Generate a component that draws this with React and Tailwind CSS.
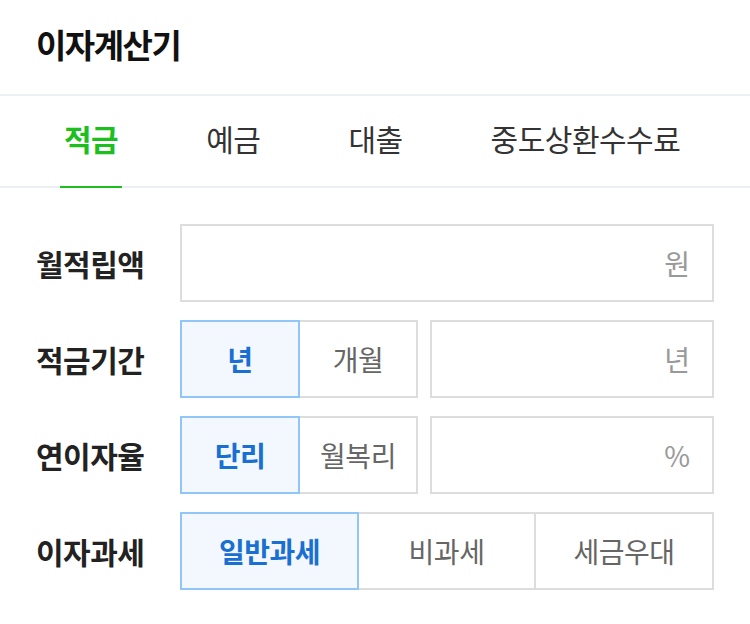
import React from 'react';

// ─── Data ───────────────────────
const TABS = ['적금', '예금', '대출', '중도상환수수료'];

function Segment({ items, widths }) {
  return (
    <div className="flex h-full">
      {items.map((item, idx) => (
        <div
          key={idx}
          className={
            (item.active
              ? 'border-2 border-[#90c6fa] bg-[#f3f8ff] text-[#1a6fd2] font-bold'
              : 'border-2 border-l-0 border-[#dddddd] bg-white text-[#666666]') +
            ' flex items-center justify-center text-[28px] tracking-[-0.5px] ' +
            widths[idx]
          }
        >
          {item.label}
        </div>
      ))}
    </div>
  );
}

function Field({ unit }) {
  return (
    <div className="flex-1 h-full border-2 border-[#dddddd] bg-white flex items-center justify-end pr-[22px] text-[28px] text-[#999999]">
      {unit}
    </div>
  );
}

function Row({ label, children }) {
  return (
    <div className="flex items-center h-[78px]">
      <div className="w-[144px] shrink-0 whitespace-nowrap text-[30px] font-bold text-[#222222] tracking-[-0.5px]">{label}</div>
      <div className="flex flex-1 h-full">{children}</div>
    </div>
  );
}

export default function App() {
  return (
    <div
      className="w-[750px] h-[624px] bg-white overflow-hidden"
      style={{ fontFamily: '"Noto Sans CJK KR", "Noto Sans", sans-serif' }}
    >
      {/* HEADER */}
      <header className="h-[96px] flex items-center pl-[36px] border-b-2 border-[#eceff3]">
        <h1 className="text-[33px] font-bold text-[#111111] tracking-[-1.5px] leading-none -mt-[6px]">이자계산기</h1>
      </header>

      {/* TABS */}
      <nav className="h-[92px] flex gap-[80px] pl-[60px] border-b-2 border-[#eceff3]">
        {TABS.map((tab, idx) => (
          <div
            key={idx}
            className={
              (idx === 0
                ? 'text-[#1cbf1e] font-bold border-[#1cbf1e]'
                : 'text-[#333333] border-transparent') +
              ' h-[92px] shrink-0 whitespace-nowrap border-b-2 flex items-center px-[4px] text-[30px] tracking-[-0.5px] pb-[6px]'
            }
          >
            {tab}
          </div>
        ))}
      </nav>

      {/* FORM */}
      <main className="pt-[36px] pl-[36px] pr-[36px] flex flex-col gap-[18px]">
        <Row label="월적립액">
          <Field unit="원" />
        </Row>
        <Row label="적금기간">
          <Segment
            items={[{ label: '년', active: true }, { label: '개월' }]}
            widths={['w-[120px]', 'w-[118px]']}
          />
          <div className="w-[12px]" />
          <Field unit="년" />
        </Row>
        <Row label="연이자율">
          <Segment
            items={[{ label: '단리', active: true }, { label: '월복리' }]}
            widths={['w-[120px]', 'w-[118px]']}
          />
          <div className="w-[12px]" />
          <Field unit="%" />
        </Row>
        <Row label="이자과세">
          <Segment
            items={[{ label: '일반과세', active: true }, { label: '비과세' }, { label: '세금우대' }]}
            widths={['w-[179px]', 'w-[177px]', 'w-[178px]']}
          />
        </Row>
      </main>
    </div>
  );
}
